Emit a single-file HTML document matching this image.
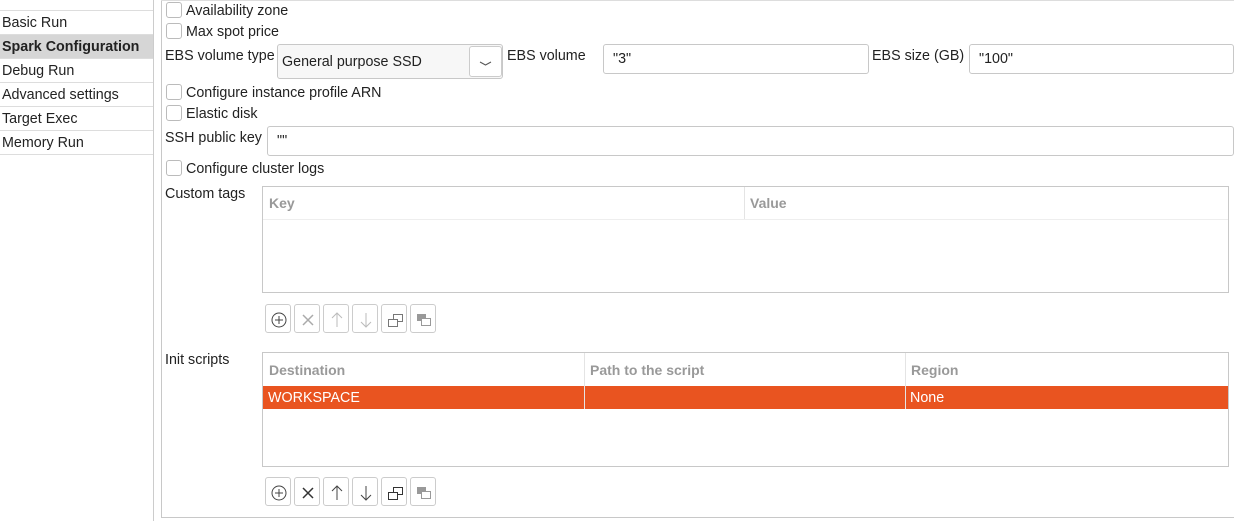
<!DOCTYPE html>
<html><head><style>
body{margin:0;width:1234px;height:521px;background:#fff;font-family:"Liberation Sans",sans-serif;font-size:14.3px;color:#222;position:relative;overflow:hidden}
.a{position:absolute}
.side{left:0;top:10px;width:153px}
.si{position:absolute;left:0;width:153px;height:24px;border-top:1px solid #ddd;line-height:24px;padding-left:2px;box-sizing:border-box;white-space:nowrap}
.cb{position:absolute;width:14px;height:14px;border:1px solid #bbb;border-radius:3px;background:#fff}
.lbl{position:absolute;white-space:nowrap}
.inp{position:absolute;border:1px solid #c8c8c8;border-radius:3px;background:#fff;box-sizing:border-box;padding-left:9px;line-height:29px}
.tbl{position:absolute;border:1px solid #c8c8c8;box-sizing:border-box;background:#fff}
.th{position:absolute;color:#999;font-weight:bold;font-size:14px}
.btn{position:absolute;width:26px;height:29px;border:1px solid #ccc;border-radius:3px;box-sizing:border-box;background:#fff}
.btn svg{position:absolute;left:4px;top:6px}
</style></head><body>
<div class="a" style="left:153px;top:0;width:1px;height:521px;background:#ccc"></div>
<div class="a" style="left:161px;top:0;width:1px;height:518px;background:#c8c8c8"></div>
<div class="a" style="left:161px;top:517px;width:1073px;height:1px;background:#c8c8c8"></div>
<div class="a" style="left:161px;top:0;width:1073px;height:1px;background:#ddd"></div>
<div class="a side">
<div class="si" style="top:0">Basic Run</div>
<div class="si" style="top:24px;background:#d6d6d6;font-weight:bold">Spark Configuration</div>
<div class="si" style="top:48px">Debug Run</div>
<div class="si" style="top:72px">Advanced settings</div>
<div class="si" style="top:96px">Target Exec</div>
<div class="si" style="top:120px;border-bottom:1px solid #ddd;height:25px">Memory Run</div>
</div>

<div class="cb" style="left:166px;top:2px"></div><div class="lbl" style="left:186px;top:3px">Availability zone</div>
<div class="cb" style="left:166px;top:23px"></div><div class="lbl" style="left:186px;top:24px">Max spot price</div>
<div class="lbl" style="left:165px;top:48px">EBS volume type</div>
<div class="inp" style="left:277px;top:44px;width:226px;height:35px;line-height:35px;background:#f7f7f7;padding-left:4px">General purpose SSD
<div class="a" style="left:191px;top:1px;width:33px;height:31px;border:1px solid #ccc;border-radius:3px;background:#fff;box-sizing:border-box"><svg width="31" height="29" style="position:absolute;left:0;top:0"><path d="M10 15 L15.5 18 L21 15" stroke="#555" fill="none"/></svg></div></div>
<div class="lbl" style="left:507px;top:48px">EBS volume</div>
<div class="inp" style="left:603px;top:44px;width:266px;height:30px">"3"</div>
<div class="lbl" style="left:872px;top:48px">EBS size (GB)</div>
<div class="inp" style="left:969px;top:44px;width:265px;height:30px">"100"</div>
<div class="cb" style="left:166px;top:84px"></div><div class="lbl" style="left:186px;top:85px">Configure instance profile ARN</div>
<div class="cb" style="left:166px;top:105px"></div><div class="lbl" style="left:186px;top:106px">Elastic disk</div>
<div class="lbl" style="left:165px;top:130px">SSH public key</div>
<div class="inp" style="left:267px;top:126px;width:967px;height:30px">""</div>
<div class="cb" style="left:166px;top:160px"></div><div class="lbl" style="left:186px;top:161px">Configure cluster logs</div>

<div class="lbl" style="left:165px;top:186px">Custom tags</div>
<div class="tbl" style="left:262px;top:186px;width:967px;height:107px">
<div class="a" style="left:0;top:32px;width:965px;height:1px;background:#eee"></div>
<div class="a" style="left:481px;top:0;width:1px;height:32px;background:#e4e4e4"></div>
<div class="th" style="left:6px;top:8px">Key</div><div class="th" style="left:487px;top:8px">Value</div>
</div>

<div class="lbl" style="left:165px;top:352px">Init scripts</div>
<div class="tbl" style="left:262px;top:352px;width:967px;height:115px">
<div class="a" style="left:0;top:33px;width:965px;height:23px;background:#e95420"></div>
<div class="a" style="left:321px;top:0;width:1px;height:56px;background:#e4e4e4"></div>
<div class="a" style="left:642px;top:0;width:1px;height:56px;background:#e4e4e4"></div>
<div class="th" style="left:6px;top:9px">Destination</div><div class="th" style="left:327px;top:9px">Path to the script</div><div class="th" style="left:648px;top:9px">Region</div>
<div class="a" style="left:5px;top:37px;color:#fff">WORKSPACE</div>
<div class="a" style="left:647px;top:37px;color:#fff">None</div>
</div>

<div class="btn" style="left:265px;top:304px"><svg width="18" height="18"><circle cx="9" cy="9" r="7" stroke="#444" fill="none"/><path d="M9 5V13M5 9H13" stroke="#444"/></svg></div>
<div class="btn" style="left:294px;top:304px"><svg width="18" height="18"><path d="M4 4L14 14M14 4L4 14" stroke="#aaa" stroke-width="1.5"/></svg></div>
<div class="btn" style="left:323px;top:304px"><svg width="18" height="18"><path d="M9 2V16M4 7L9 2L14 7" stroke="#bbb" fill="none"/></svg></div>
<div class="btn" style="left:352px;top:304px"><svg width="18" height="18"><path d="M9 2V16M4 11L9 16L14 11" stroke="#bbb" fill="none"/></svg></div>
<div class="btn" style="left:381px;top:304px"><svg width="18" height="18"><rect x="7.5" y="3.5" width="9" height="7" stroke="#777" fill="#fff"/><rect x="2.5" y="8.5" width="9" height="7" stroke="#777" fill="#fff"/></svg></div>
<div class="btn" style="left:410px;top:304px"><svg width="18" height="18"><rect x="2" y="3" width="9" height="7" fill="#999"/><rect x="6.5" y="7.5" width="9" height="7" stroke="#999" fill="#fff"/></svg></div>

<div class="btn" style="left:265px;top:477px"><svg width="18" height="18"><circle cx="9" cy="9" r="7" stroke="#444" fill="none"/><path d="M9 5V13M5 9H13" stroke="#444"/></svg></div>
<div class="btn" style="left:294px;top:477px"><svg width="18" height="18"><path d="M4 4L14 14M14 4L4 14" stroke="#333" stroke-width="1.5"/></svg></div>
<div class="btn" style="left:323px;top:477px"><svg width="18" height="18"><path d="M9 2V16M4 7L9 2L14 7" stroke="#444" fill="none"/></svg></div>
<div class="btn" style="left:352px;top:477px"><svg width="18" height="18"><path d="M9 2V16M4 11L9 16L14 11" stroke="#444" fill="none"/></svg></div>
<div class="btn" style="left:381px;top:477px"><svg width="18" height="18"><rect x="7.5" y="3.5" width="9" height="7" stroke="#333" fill="#fff"/><rect x="2.5" y="8.5" width="9" height="7" stroke="#333" fill="#fff"/></svg></div>
<div class="btn" style="left:410px;top:477px"><svg width="18" height="18"><rect x="2" y="3" width="9" height="7" fill="#999"/><rect x="6.5" y="7.5" width="9" height="7" stroke="#999" fill="#fff"/></svg></div>
</body></html>
